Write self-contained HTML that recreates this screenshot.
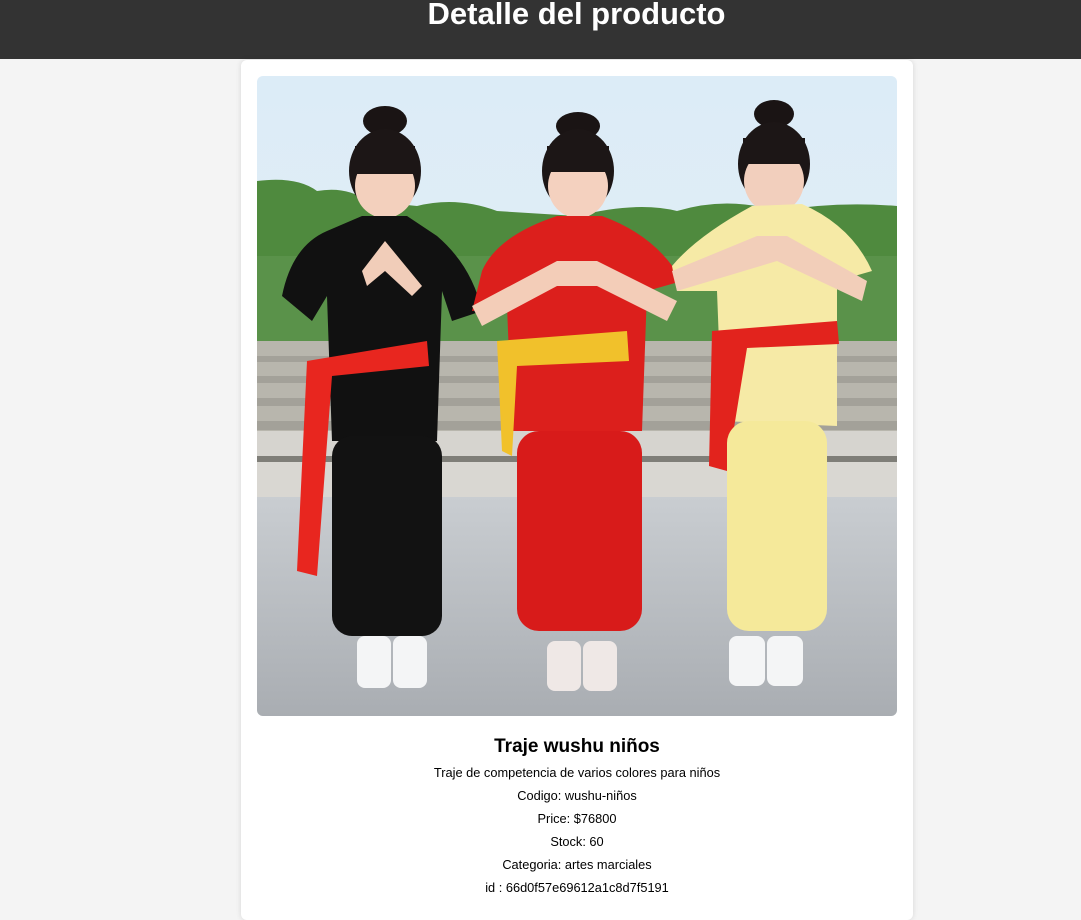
<!DOCTYPE html>
<html><head><meta charset="utf-8"><style>
html,body{margin:0;padding:0}
body{width:1081px;height:901px;background:#f4f4f4;font-family:"Liberation Sans",Arial,sans-serif;overflow:hidden;position:relative}
.hdr{position:absolute;left:0;top:0;width:1081px;height:59px;background:#333}
.hdr h1{margin:0;position:absolute;top:-6px;left:0;width:1153px;text-align:center;color:#fff;font-size:31px;font-weight:bold;line-height:40px}
.card{position:absolute;left:241px;top:60px;width:672px;height:860px;background:#fff;border-radius:6px;box-shadow:0 0 6px rgba(0,0,0,.12)}
.img{position:absolute;left:16px;top:16px;width:640px;height:640px;border-radius:6px;overflow:hidden}
.info{position:absolute;left:0;top:674px;width:672px;text-align:center;color:#000}
.info h2{margin:0;font-size:19px;line-height:26px;font-weight:bold;height:27px}
.info p{margin:0;font-size:12.8px;line-height:23px}
</style></head><body>
<div class="hdr"><h1>Detalle del producto</h1></div>
<div class="card">
<div class="img"><svg width="640" height="640" viewBox="0 0 640 640">
<defs><linearGradient id="sky" x1="0" y1="0" x2="0" y2="1"><stop offset="0" stop-color="#dcecf7"/><stop offset="1" stop-color="#e8f0f4"/></linearGradient>
<linearGradient id="pav" x1="0" y1="0" x2="0" y2="1"><stop offset="0" stop-color="#c9cdd1"/><stop offset="1" stop-color="#a9adb2"/></linearGradient></defs>
<rect width="640" height="640" fill="url(#sky)"/>
<path d="M0 105 Q40 100 60 115 Q90 110 110 125 L160 130 Q200 120 240 135 L320 140 Q380 125 420 135 Q470 120 520 135 Q580 125 640 130 L640 270 L0 270Z" fill="#4f8a3e"/>
<rect x="0" y="180" width="640" height="90" fill="#5f9550" opacity=".7"/>
<rect x="0" y="265" width="640" height="160" fill="#b8b6ad"/>
<g fill="#8f8d86" opacity=".5"><rect x="0" y="280" width="640" height="6"/><rect x="0" y="300" width="640" height="7"/><rect x="0" y="322" width="640" height="8"/><rect x="0" y="345" width="640" height="9"/></g>
<rect x="0" y="355" width="640" height="25" fill="#d6d4cf"/>
<rect x="0" y="380" width="640" height="6" fill="#7f7e78"/>
<rect x="0" y="386" width="640" height="35" fill="#d9d7d2"/>
<rect x="0" y="421" width="640" height="219" fill="url(#pav)"/>
<ellipse cx="128" cy="45" rx="22" ry="15" fill="#1a1414"/>
<ellipse cx="128" cy="95" rx="36" ry="42" fill="#1c1616"/>
<ellipse cx="128" cy="110" rx="30" ry="32" fill="#f3d0bd"/>
<rect x="98" y="70" width="60" height="28" fill="#1c1616"/>
<path d="M25 220 Q35 170 70 155 L105 140 L150 140 L180 160 Q215 190 225 235 L195 245 L185 215 L180 365 L75 365 L70 220 L55 245Z" fill="#111"/>
<path d="M105 195 L128 165 L165 210 L155 220 L128 195 L110 210Z" fill="#f1cdb9"/>
<rect x="75" y="360" width="110" height="200" rx="20" fill="#121212"/>
<path d="M50 285 L170 265 L172 290 L75 300 L60 500 L40 495Z" fill="#e8261f"/>
<rect x="100" y="560" width="34" height="52" rx="8" fill="#f4f5f6"/><rect x="136" y="560" width="34" height="52" rx="8" fill="#f4f5f6"/>
<ellipse cx="321" cy="50" rx="22" ry="14" fill="#1a1414"/>
<ellipse cx="321" cy="95" rx="36" ry="42" fill="#1c1616"/>
<ellipse cx="321" cy="110" rx="30" ry="32" fill="#f4d1bf"/>
<rect x="290" y="70" width="62" height="26" fill="#1c1616"/>
<path d="M225 195 Q240 160 300 140 L345 140 Q400 160 425 205 L390 215 L385 355 L255 355 L250 230 L215 235Z" fill="#dc1f1c"/>
<path d="M215 230 L300 185 L340 185 L420 225 L410 245 L340 210 L300 210 L225 250Z" fill="#f3cdb8"/>
<path d="M240 265 L370 255 L372 285 L260 290 L255 380 L245 375Z" fill="#f1c12b"/>
<rect x="260" y="355" width="125" height="200" rx="22" fill="#d81b1a"/>
<rect x="290" y="565" width="34" height="50" rx="8" fill="#efe8e6"/><rect x="326" y="565" width="34" height="50" rx="8" fill="#efe8e6"/>
<ellipse cx="517" cy="38" rx="20" ry="14" fill="#1a1414"/>
<ellipse cx="517" cy="88" rx="36" ry="42" fill="#1c1616"/>
<ellipse cx="517" cy="105" rx="30" ry="32" fill="#f2cfbd"/>
<rect x="486" y="62" width="62" height="26" fill="#1c1616"/>
<path d="M415 190 Q440 160 495 130 L545 128 Q595 150 615 195 L580 205 L580 350 L465 345 L460 215 L420 215Z" fill="#f6eaa6"/>
<path d="M415 195 L500 160 L530 160 L610 205 L605 225 L520 185 L420 215Z" fill="#f2ceb9"/>
<path d="M455 255 L580 245 L582 268 L490 272 L470 395 L452 390Z" fill="#e2231d"/>
<rect x="470" y="345" width="100" height="210" rx="22" fill="#f5e99a"/>
<rect x="472" y="560" width="36" height="50" rx="8" fill="#f4f5f6"/><rect x="510" y="560" width="36" height="50" rx="8" fill="#f4f5f6"/>
</svg></div>
<div class="info">
<h2>Traje wushu niños</h2>
<p>Traje de competencia de varios colores para niños</p>
<p>Codigo: wushu-niños</p>
<p>Price: $76800</p>
<p>Stock: 60</p>
<p>Categoria: artes marciales</p>
<p>id : 66d0f57e69612a1c8d7f5191</p>
</div>
</div>
</body></html>
